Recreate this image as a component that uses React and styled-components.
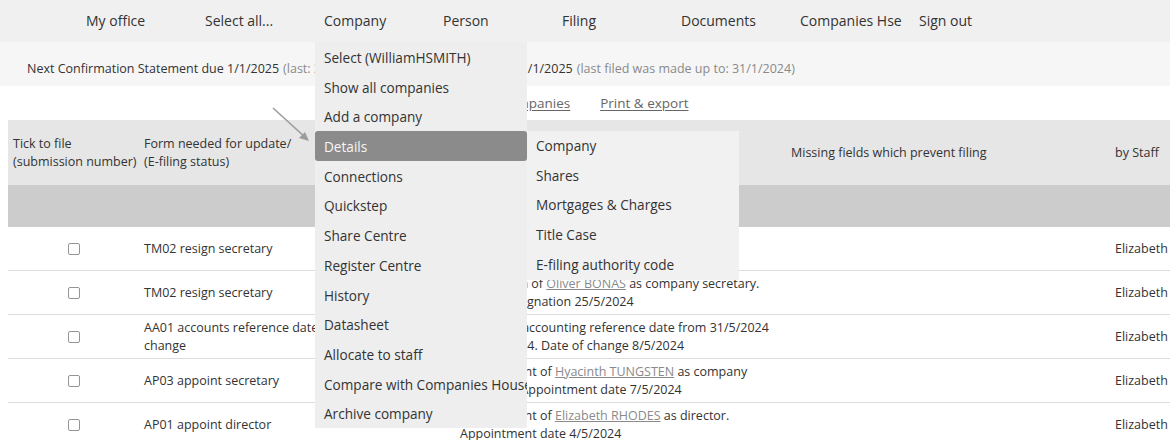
import React from "react"
import styled, { createGlobalStyle } from "styled-components"

const GlobalStyle = createGlobalStyle`
  html, body {
    margin: 0;
    padding: 0;
    background: #ffffff;
    overflow: hidden;
  }
  body {
    font-family: "Open Sans", "Liberation Sans", sans-serif;
    color: #333333;
    font-size: 14px;
  }
`

const Page = styled.div`
  position: relative;
  width: 1170px;
  height: 440px;
  overflow: hidden;
`

const NavBar = styled.nav`
  display: flex;
  align-items: center;
  height: 42px;
  padding-left: 86px;
  background: #f0f0f0;
`

const NavItem = styled.div`
  position: relative;
  width: 119px;
  height: 42px;
  line-height: 41px;
  font-size: 14px;
  color: #333;
  white-space: nowrap;
`

const Dropdown = styled.div`
  position: absolute;
  top: 42px;
  left: -9px;
  width: 212px;
  background: #eeeeee;
  z-index: 10;
  line-height: normal;
`

const MenuItem = styled.div`
  position: relative;
  height: 29.7px;
  line-height: 31px;
  padding: 0 9px;
  font-size: 13.6px;
  white-space: nowrap;
  overflow: ${p => (p.$open ? "visible" : "hidden")};
  color: ${p => (p.$active ? "#f6f6f6" : "#333")};
  background: ${p => (p.$active ? "#8b8b8b" : "transparent")};
  border-radius: ${p => (p.$active ? "3px" : "0")};
`

const SubMenu = styled.div`
  position: absolute;
  top: 0;
  left: 100%;
  width: 212px;
  background: #f1f1f1;
`

const SubItem = styled.div`
  height: 29.7px;
  line-height: 30px;
  padding: 0 9px;
  color: #333;
  white-space: nowrap;
`

const Band = styled.div`
  display: flex;
  align-items: center;
  height: 44px;
  padding: 8px 0 0 27px;
  box-sizing: border-box;
  background: #f6f6f6;
  font-size: 12.5px;
  white-space: nowrap;
`

const Seg = styled.span`
  color: ${p => (p.$muted ? "#8a8a8a" : "#333")};
  margin-left: ${p => p.$gap || 0}px;
`

const Panel = styled.div`
  margin-left: 8px;
  background: #ffffff;
`

const LinksRow = styled.div`
  display: flex;
  align-items: center;
  gap: 30px;
  height: 34px;
  padding-left: 438px;
  font-size: 13.5px;
`

const Link = styled.a`
  color: #666;
  text-decoration: underline;
  text-underline-offset: 2px;
  white-space: nowrap;
`

const Table = styled.table`
  border-collapse: collapse;
  table-layout: fixed;
  width: 1230px;
  font-size: 12.5px;
`

const Th = styled.th`
  height: 65px;
  padding: 0 5px;
  background: #e6e6e6;
  font-weight: normal;
  text-align: left;
  vertical-align: middle;
  line-height: 18px;
  color: #333;
  white-space: nowrap;
`

const GroupCell = styled.td`
  height: 42px;
  padding: 0;
  background: #cccccc;
`

const Row = styled.tr`
  border-bottom: 1px solid #dcdcdc;
`

const Td = styled.td`
  padding: 4px 5px;
  line-height: 17.5px;
  vertical-align: middle;
  text-align: ${p => (p.$center ? "center" : "left")};
  white-space: nowrap;
  overflow: hidden;
`

const Box = styled.input`
  appearance: none;
  width: 12px;
  height: 12px;
  margin: 0;
  border: 1px solid #959595;
  border-radius: 2px;
  background: #fff;
  vertical-align: middle;
`

const Person = styled.a`
  color: #8a8a8a;
  text-decoration: underline;
`

const Arrow = styled.svg`
  position: absolute;
  left: 268px;
  top: 104px;
  z-index: 5;
`

const navItems = ["My office", "Select all...", "Company", "Person", "Filing", "Documents", "Companies Hse", "Sign out"]

const menuItems = [
  "Select (WilliamHSMITH)",
  "Show all companies",
  "Add a company",
  "Details",
  "Connections",
  "Quickstep",
  "Share Centre",
  "Register Centre",
  "History",
  "Datasheet",
  "Allocate to staff",
  "Compare with Companies House",
  "Archive company",
]

const subItems = ["Company", "Shares", "Mortgages & Charges", "Title Case", "E-filing authority code"]

const rows = [
  {
    form: ["TM02 resign secretary"],
    desc: [<>Resignation of Ann GREY.</>, <>Date of resignation 25/5/2024</>],
  },
  {
    form: ["TM02 resign secretary"],
    desc: [
      <>Resignation of <Person>Oliver BONAS</Person> as company secretary.</>,
      <>Date of resignation 25/5/2024</>,
    ],
  },
  {
    form: ["AA01 accounts reference date", "change"],
    desc: [<>Change of accounting reference date from 31/5/2024</>, <>to 30/4/2024. Date of change 8/5/2024</>],
  },
  {
    form: ["AP03 appoint secretary"],
    desc: [
      <>Appointment of <Person>Hyacinth TUNGSTEN</Person> as company</>,
      <>secretary. Appointment date 7/5/2024</>,
    ],
  },
  {
    form: ["AP01 appoint director"],
    desc: [<>Appointment of <Person>Elizabeth RHODES</Person> as director.</>, <>Appointment date 4/5/2024</>],
  },
]

const CompanyMenu = () => (
  <Dropdown>
    {menuItems.map(item =>
      item === "Details" ? (
        <MenuItem key={item} $active $open>
          {item}
          <SubMenu>
            {subItems.map(s => (
              <SubItem key={s}>{s}</SubItem>
            ))}
          </SubMenu>
        </MenuItem>
      ) : (
        <MenuItem key={item}>{item}</MenuItem>
      )
    )}
  </Dropdown>
)

const App = () => {
  return (
    <>
      <GlobalStyle />
      <Page>
        <NavBar>
          {navItems.map(n => (
            <NavItem key={n}>
              {n}
              {n === "Company" && <CompanyMenu />}
            </NavItem>
          ))}
        </NavBar>

        <Band>
          <Seg>Next Confirmation Statement due 1/1/2025</Seg>
          <Seg $muted $gap={4}>(last: 31/12/2023)</Seg>
          <Seg $gap={17}>Next Accounts due 31/1/2025</Seg>
          <Seg $muted $gap={4}>(last filed was made up to: 31/1/2024)</Seg>
        </Band>

        <Panel>
          <LinksRow>
            <Link>Show all companies</Link>
            <Link>Print &amp; export</Link>
          </LinksRow>

          <Table>
            <colgroup>
              <col style={{ width: 131 }} />
              <col style={{ width: 316 }} />
              <col style={{ width: 331 }} />
              <col style={{ width: 324 }} />
              <col style={{ width: 128 }} />
            </colgroup>
            <thead>
              <tr>
                <Th>Tick to file<br />(submission number)</Th>
                <Th>Form needed for update/<br />(E-filing status)</Th>
                <Th>Description</Th>
                <Th>Missing fields which prevent filing</Th>
                <Th>by Staff</Th>
              </tr>
            </thead>
            <tbody>
              <tr>
                <GroupCell colSpan={5} />
              </tr>
              {rows.map((r, i) => (
                <Row key={i}>
                  <Td $center>
                    <Box type="checkbox" />
                  </Td>
                  <Td>
                    {r.form[0]}
                    {r.form[1] && (
                      <>
                        <br />
                        {r.form[1]}
                      </>
                    )}
                  </Td>
                  <Td>
                    {r.desc[0]}
                    <br />
                    {r.desc[1]}
                  </Td>
                  <Td />
                  <Td>Elizabeth</Td>
                </Row>
              ))}
            </tbody>
          </Table>
        </Panel>

        <Arrow width="46" height="42" viewBox="0 0 46 42">
          <line x1="5" y1="4" x2="38" y2="34" stroke="#9c9c9c" strokeWidth="1.6" />
          <polygon points="41,37 31,34 37,28" fill="#9c9c9c" />
        </Arrow>
      </Page>
    </>
  )
}

export default App
